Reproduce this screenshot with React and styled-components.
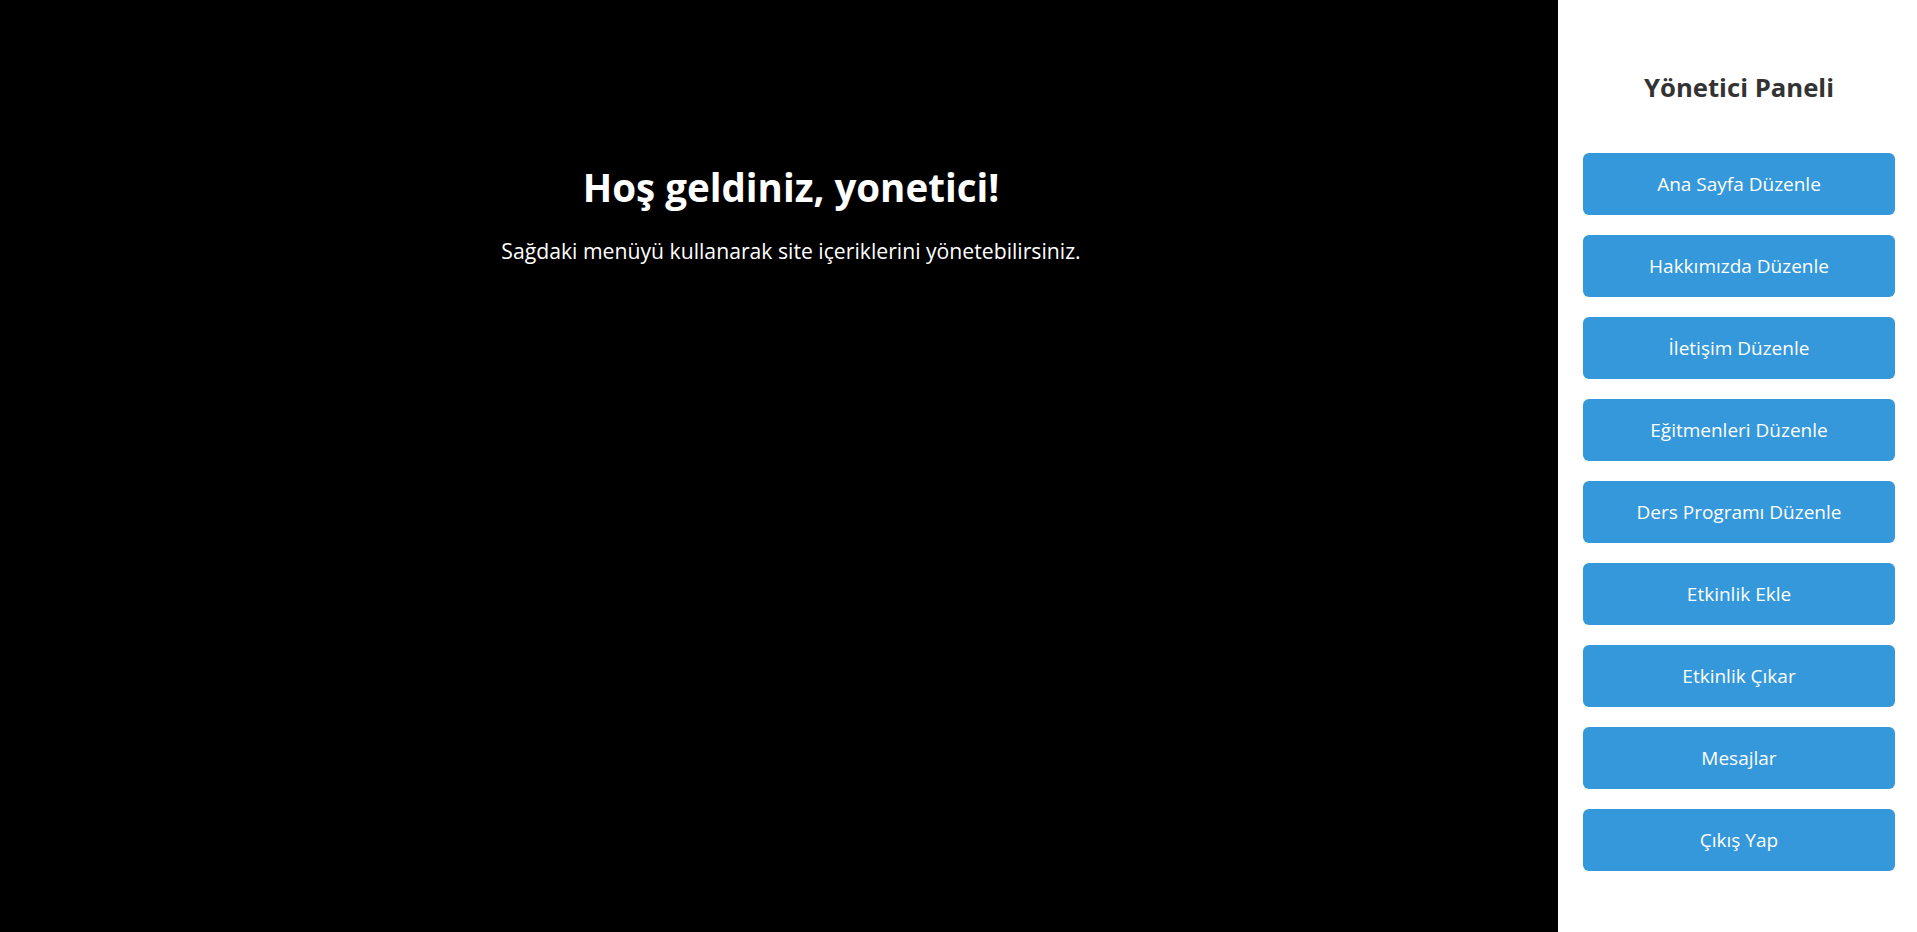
import React from "react";
import styled, { createGlobalStyle } from "styled-components";

const Global = createGlobalStyle`
  html, body { margin: 0; padding: 0; height: 100%; }
  body { background: #000; font-family: "Segoe UI", "Open Sans", "Noto Sans", sans-serif; }
  #root { height: 100%; }
`;

const Layout = styled.div`
  display: flex;
  width: 100%;
  height: 932px;
  overflow: hidden;
`;

const Main = styled.main`
  flex: 1;
  background: #000;
  color: #fff;
  padding: 0 0 0 24px;
  text-align: center;
`;

const Welcome = styled.h1`
  margin: 162px 0 0;
  font-size: 38.5px;
  font-weight: 700;
  line-height: 50px;
`;

const Lead = styled.p`
  margin: 25px 0 0;
  font-size: 21.2px;
  line-height: 28px;
`;

const Sidebar = styled.aside`
  width: 359px;
  flex: none;
  background: #fff;
  box-sizing: border-box;
  padding: 0 22px 0 25px;
  display: flex;
  flex-direction: column;
`;

const PanelTitle = styled.h2`
  margin: 71px 0 48px;
  text-align: center;
  color: #333;
  font-size: 25.7px;
  font-weight: 700;
  line-height: 34px;
`;

const Menu = styled.nav`
  display: flex;
  flex-direction: column;
  gap: 20px;
`;

const MenuButton = styled.button`
  height: 62px;
  border: none;
  border-radius: 6px;
  background: #3498db;
  color: #fff;
  font-family: inherit;
  font-size: 19px;
  cursor: pointer;
`;

const items = [
  "Ana Sayfa Düzenle",
  "Hakkımızda Düzenle",
  "İletişim Düzenle",
  "Eğitmenleri Düzenle",
  "Ders Programı Düzenle",
  "Etkinlik Ekle",
  "Etkinlik Çıkar",
  "Mesajlar",
  "Çıkış Yap",
];

export default function App() {
  return (
    <>
      <Global />
      <Layout>
        <Main>
          <Welcome>Hoş geldiniz, yonetici!</Welcome>
          <Lead>Sağdaki menüyü kullanarak site içeriklerini yönetebilirsiniz.</Lead>
        </Main>
        <Sidebar>
          <PanelTitle>Yönetici Paneli</PanelTitle>
          <Menu>
            {items.map((t) => (
              <MenuButton key={t}>{t}</MenuButton>
            ))}
          </Menu>
        </Sidebar>
      </Layout>
    </>
  );
}
